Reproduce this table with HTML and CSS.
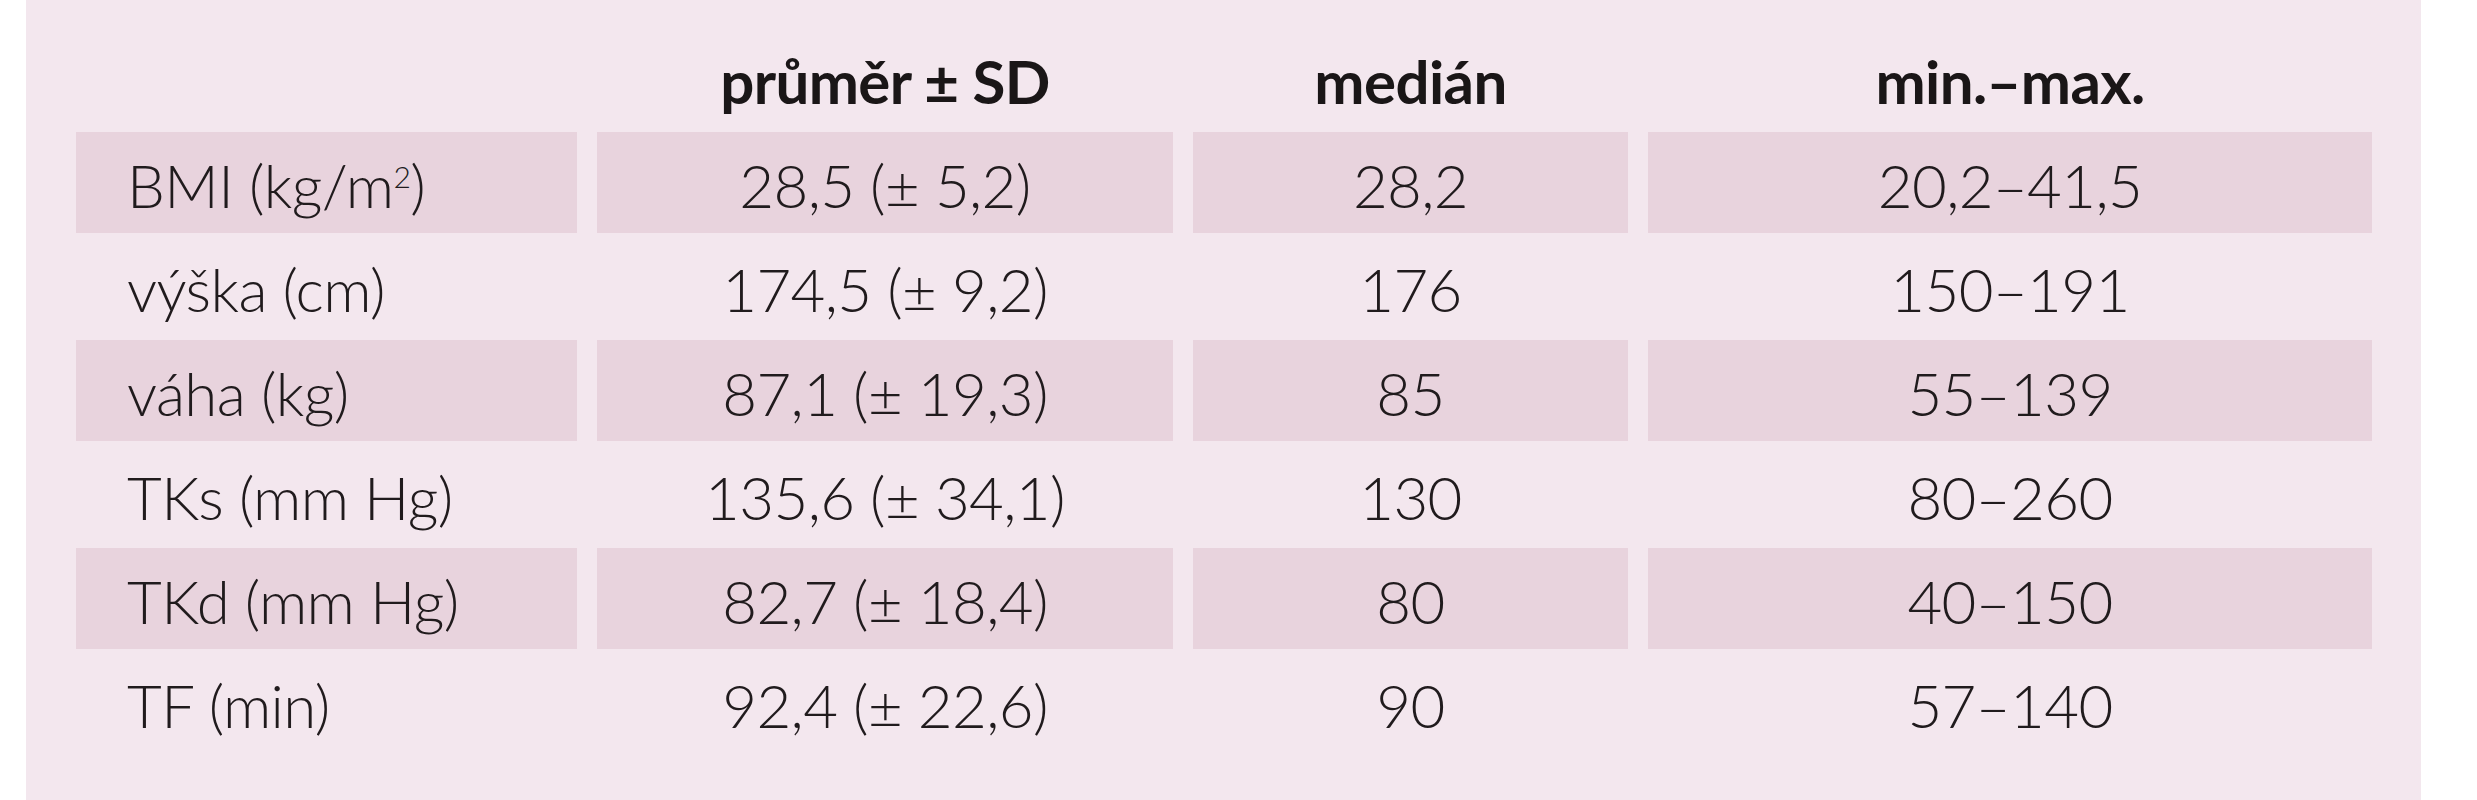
FILE: index.html
```html
<!DOCTYPE html>
<html lang="cs">
<head>
<meta charset="utf-8">
<title>Tabulka</title>
<link rel="stylesheet" href="styles.css">
</head>
<body>
<div class="panel">
  <div class="grid">
    <div class="cell head"></div>
    <div class="cell head c">průměr ± SD</div>
    <div class="cell head c">medián</div>
    <div class="cell head c">min.–max.</div>

    <div class="cell s l">BMI (kg/m<sup>2</sup>)</div>
    <div class="cell s c">28,5 (± 5,2)</div>
    <div class="cell s c">28,2</div>
    <div class="cell s c">20,2–41,5</div>

    <div class="cell l">výška (cm)</div>
    <div class="cell c">174,5 (± 9,2)</div>
    <div class="cell c">176</div>
    <div class="cell c">150–191</div>

    <div class="cell s l">váha (kg)</div>
    <div class="cell s c">87,1 (± 19,3)</div>
    <div class="cell s c">85</div>
    <div class="cell s c">55–139</div>

    <div class="cell l">TKs (mm Hg)</div>
    <div class="cell c">135,6 (± 34,1)</div>
    <div class="cell c">130</div>
    <div class="cell c">80–260</div>

    <div class="cell s l">TKd (mm Hg)</div>
    <div class="cell s c">82,7 (± 18,4)</div>
    <div class="cell s c">80</div>
    <div class="cell s c">40–150</div>

    <div class="cell l">TF (min)</div>
    <div class="cell c">92,4 (± 22,6)</div>
    <div class="cell c">90</div>
    <div class="cell c">57–140</div>
  </div>
</div>
</body>
</html>
```
FILE: styles.css
```css
html, body {
  margin: 0;
  padding: 0;
  background: #ffffff;
}
body {
  font-family: Lato, "Open Sans", "Liberation Sans", sans-serif;
  color: #201b1d;
}
.panel {
  margin-left: 26px;
  width: 2395px;
  height: 800px;
  box-sizing: border-box;
  padding: 28px 49px 47px 50px;
  background: #f3e7ee;
}
.grid {
  display: grid;
  grid-template-columns: 501px 576px 435px 724px;
  grid-auto-rows: 101px;
  column-gap: 20px;
  row-gap: 3px;
}
.cell {
  display: flex;
  align-items: center;
  box-sizing: border-box;
  padding-top: 4px;
  font-size: 60px;
  font-weight: 300;
  line-height: 72px;
  letter-spacing: -0.6px;
  white-space: nowrap;
}
.cell.l {
  padding-left: 51px;
}
.cell.c {
  justify-content: center;
}
.cell.s {
  background: #e8d3dd;
}
.cell.head {
  font-weight: 700;
  color: #1a1617;
}
sup {
  font-size: 0.5em;
  line-height: 0;
  position: relative;
  top: -0.3em;
  vertical-align: baseline;
}
```
